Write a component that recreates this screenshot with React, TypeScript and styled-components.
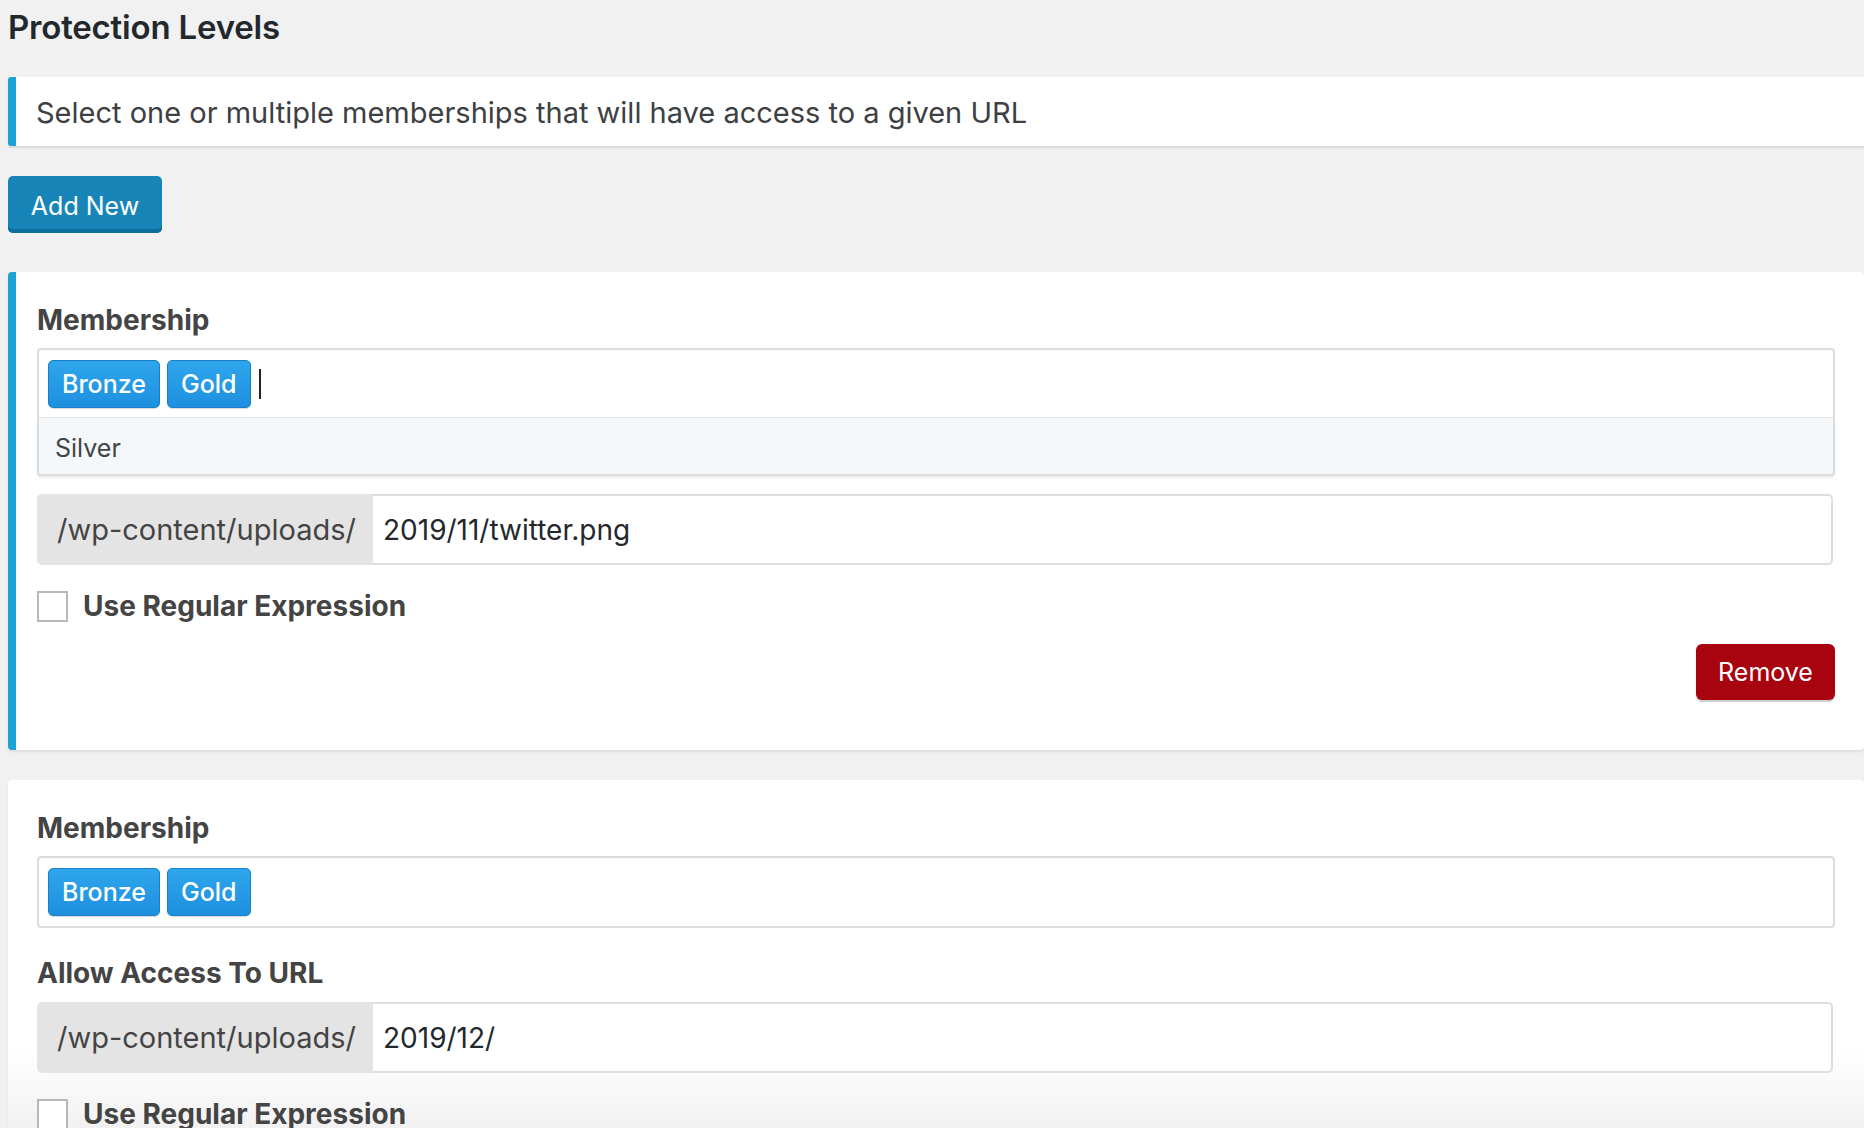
import React from "react";
import styled, { createGlobalStyle } from "styled-components";

const Global = createGlobalStyle`
  html, body { margin: 0; padding: 0; background: #f1f1f1; }
  body { font-family: Inter, "Noto Sans", "Liberation Sans", sans-serif; color: #444; }
  * { box-sizing: border-box; }
`;

const Page = styled.div`
  padding: 0 0 0 8px;
  min-height: 1128px;
  overflow: hidden;
`;

const Title = styled.h1`
  margin: 0;
  padding-top: 5px;
  font-size: 33px;
  line-height: 44px;
  font-weight: 600;
  color: #23282d;
  letter-spacing: -0.2px;
`;

const Notice = styled.div`
  margin-top: 28px;
  height: 69px;
  display: flex;
  align-items: center;
  background: #fff;
  border-left: 8px solid #1ea2d3;
  border-radius: 3px 0 0 3px;
  box-shadow: 0 2px 2px rgba(0, 0, 0, 0.1);
  padding: 2px 0 0 20px;
  font-size: 29px;
  color: #3c4043;
`;

const AddButton = styled.button`
  margin-top: 30px;
  display: block;
  width: 154px;
  height: 57px;
  border: none;
  border-radius: 5px;
  background: #1885b8;
  box-shadow: inset 0 -4px 0 #0e6f9e;
  color: #fff;
  font-family: inherit;
  font-size: 25px;
  padding: 2px 0 0;
`;

const Card = styled.section<{ $active?: boolean; $fade?: boolean }>`
  margin-top: ${(p) => (p.$active ? "39px" : "30px")};
  background: ${(p) =>
    p.$fade
      ? "linear-gradient(to bottom, #fff 0, #fff 270px, #f1f1f1 350px)"
      : "#fff"};
  border-left: ${(p) => (p.$active ? "8px solid #1ea2d3" : "none")};
  border-radius: 4px;
  box-shadow: 0 2px 2px rgba(0, 0, 0, 0.08);
  padding: 29px 29px 50px ${(p) => (p.$active ? "21px" : "29px")};
  display: flex;
  flex-direction: column;
`;

const Label = styled.div<{ $hidden?: boolean }>`
  font-size: 28px;
  line-height: 38px;
  font-weight: 700;
  color: #444;
  visibility: ${(p) => (p.$hidden ? "hidden" : "visible")};
`;

const SelectWrap = styled.div`
  position: relative;
  margin-top: 9px;
`;

const SelectBox = styled.div`
  height: 72px;
  border: 2px solid #dcdcdc;
  border-radius: 4px;
  box-shadow: inset 0 1px 2px rgba(0, 0, 0, 0.04);
  background: #fff;
  display: flex;
  align-items: center;
  gap: 7px;
  padding: 0 9px;
`;

const Tag = styled.span`
  height: 48px;
  display: inline-flex;
  align-items: center;
  padding: 0 13px;
  border: 1px solid #1a7fc6;
  border-radius: 5px;
  background: linear-gradient(to bottom, #2ea6ec, #1e8fe0);
  box-shadow: 0 1px 1px rgba(0, 0, 0, 0.15);
  color: #fff;
  font-size: 25px;
  font-weight: 500;
`;

const Caret = styled.span`
  width: 2px;
  height: 30px;
  background: #222;
  margin-left: 1px;
`;

const Dropdown = styled.div`
  position: absolute;
  left: 0;
  right: 0;
  top: calc(100% - 3px);
  height: 59px;
  z-index: 2;
  background: #f4f8fb;
  border: 2px solid #dcdcdc;
  border-top: 1px solid #e6e6e6;
  border-radius: 0 0 4px 4px;
  box-shadow: 0 2px 3px rgba(0, 0, 0, 0.08);
  display: flex;
  align-items: center;
  padding: 3px 0 0 16px;
  font-size: 25px;
  color: #444;
`;

const UrlLabel = styled(Label)`
  margin-top: 26px;
`;

const UrlRow = styled.div`
  margin-top: 10px;
  height: 71px;
  display: flex;
  margin-right: 2px;
`;

const Prefix = styled.div`
  width: 336px;
  background: #e4e4e4;
  border-radius: 5px 0 0 5px;
  display: flex;
  align-items: center;
  padding-left: 20px;
  font-size: 29px;
  color: #444;
`;

const UrlInput = styled.div`
  flex: 1;
  border: 2px solid #dedede;
  border-left: none;
  border-radius: 0 5px 5px 0;
  background: #fff;
  display: flex;
  align-items: center;
  padding-left: 10px;
  font-size: 28px;
  color: #23282d;
`;

const CheckRow = styled.label`
  margin-top: 24px;
  display: flex;
  align-items: center;
  gap: 15px;
  font-size: 28px;
  font-weight: 700;
  color: #444;
`;

const Box = styled.span`
  width: 31px;
  height: 31px;
  border: 2px solid #b4b9be;
  background: #fff;
  display: inline-block;
`;

const Actions = styled.div`
  margin-top: 21px;
  display: flex;
  justify-content: flex-end;
`;

const RemoveButton = styled.button`
  width: 139px;
  height: 56px;
  border: none;
  border-radius: 6px;
  background: #a8040f;
  box-shadow: 0 2px 1px rgba(0, 0, 0, 0.2);
  color: #fff;
  font-family: inherit;
  font-size: 25px;
`;

const Rule = ({ active, open, path }: { active?: boolean; open?: boolean; path: string }) => (
  <Card $active={active} $fade={!active}>
    <Label>Membership</Label>
    <SelectWrap>
      <SelectBox>
        <Tag>Bronze</Tag>
        <Tag>Gold</Tag>
        {open && <Caret />}
      </SelectBox>
      {open && <Dropdown>Silver</Dropdown>}
    </SelectWrap>
    <UrlLabel $hidden={open}>Allow Access To URL</UrlLabel>
    <UrlRow>
      <Prefix>/wp-content/uploads/</Prefix>
      <UrlInput>{path}</UrlInput>
    </UrlRow>
    <CheckRow>
      <Box />
      Use Regular Expression
    </CheckRow>
    <Actions>
      <RemoveButton>Remove</RemoveButton>
    </Actions>
  </Card>
);

export default function App() {
  return (
    <Page>
      <Global />
      <Title>Protection Levels</Title>
      <Notice>Select one or multiple memberships that will have access to a given URL</Notice>
      <AddButton>Add New</AddButton>
      <Rule active open path="2019/11/twitter.png" />
      <Rule path="2019/12/" />
    </Page>
  );
}
